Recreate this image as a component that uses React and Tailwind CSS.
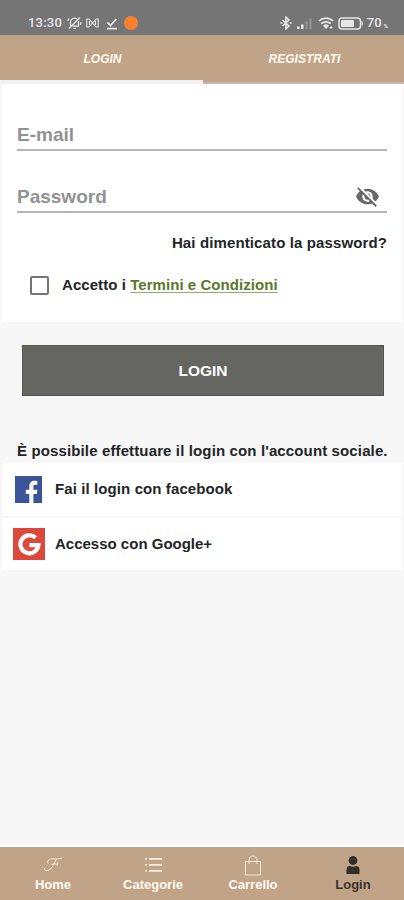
import React, { useState } from 'react';

const StatusBar = () => (
  <div className="flex h-[35px] items-start justify-between bg-[#757575] pl-7 pr-4 pt-[15px] text-[#e6e6e6]">
    <div className="flex h-4 items-center">
      <span className="w-[35px] whitespace-nowrap font-['Roboto'] text-[13px] font-medium tracking-[0.2px]">13:30</span>
      <svg className="ml-[4px] h-[14px] w-[15px]" viewBox="0 0 15 14" fill="none" stroke="currentColor" strokeWidth="1.3">
        <path d="M3.5 10V6a4 4 0 0 1 6.5-3M11.5 5v5.2H5.5M6.5 12.4h2.5M2 12.5 13 1.5M1 5l.8-2.5M14 6l-.5 3" />
      </svg>
      <svg className="ml-[4px] h-[10px] w-[13px]" viewBox="0 0 13 10" fill="none" stroke="currentColor" strokeWidth="1.1">
        <path d="M.8 9V1h2l3.700 4 3.700-4h2v8h-2l-3.700-4-3.700 4zM3.500 3v4M9.500 3v4" />
      </svg>
      <svg className="ml-[7px] h-[13px] w-[12px]" viewBox="0 0 12 13" fill="none" stroke="currentColor" strokeWidth="1.8">
        <path d="m1.3 5.5 3.2 3L10.3 2M1 11.6h10" />
      </svg>
      <span className="ml-[6px] h-[14px] w-[14px] rounded-full bg-[#fb802e]" />
    </div>
    <div className="flex h-4 items-center">
      <svg className="h-[14px] w-[12px]" viewBox="0 0 12 14" fill="none" stroke="currentColor" strokeWidth="1.6">
        <path d="m2.5 4 6.5 6-3 2.8V1.2L9 4l-6.5 6M.4 7h2M9.600 7h2" />
      </svg>
      <svg className="ml-[5px] h-[12px] w-[16px]" viewBox="0 0 16 12">
        <path d="M0 12V9.5h2.5V12zM4 12V7.5h2.5V12z" fill="#e6e6e6" />
        <path d="M8.5 12V4.5h2V12zM12.5 12V1.5h2V12z" fill="#979797" />
      </svg>
      <svg className="ml-[5px] h-[14px] w-[16px]" viewBox="0 0 16 14" fill="none" stroke="currentColor" strokeWidth="1.7">
        <path d="M.8 5a10.5 10.5 0 0 1 14.4 0M3.2 7.7a7 7 0 0 1 9.6 0" />
        <path d="M5 9.7a4.3 4.3 0 0 1 6 0l-3 3.2z" fill="currentColor" stroke="none" />
        <path d="M13 10v3M11.5 11.5h3" strokeWidth="1" />
      </svg>
      <svg className="ml-[4px] h-[13px] w-[26px]" viewBox="0 0 26 13">
        <rect x="1" y="1" width="21.5" height="11" rx="3" fill="none" stroke="#e6e6e6" strokeWidth="1.5" />
        <rect x="3" y="3" width="13" height="7" rx="1" fill="#e6e6e6" />
        <path d="M23.5 3.500q3 3 0 6z" fill="#e6e6e6" />
      </svg>
      <span className="ml-[3px] font-['Roboto'] text-[13px] font-medium">70</span>
      <span className="ml-[2px] mt-[5px] font-['Roboto'] text-[6px] font-bold">%</span>
    </div>
  </div>
);

const EyeOff = () => (
  <svg className="h-[25px] w-[25px]" viewBox="0 0 24 24" fill="#686868">
    <path d="M12 7c2.760 0 5 2.240 5 5 0 .65-.13 1.260-.36 1.830l2.920 2.920c1.510-1.260 2.700-2.890 3.430-4.750-1.730-4.390-6-7.500-11-7.500-1.400 0-2.740.25-3.980.7l2.160 2.160C10.740 7.130 11.350 7 12 7zM2 4.270l2.280 2.280.46.46C3.080 8.300 1.780 10.020 1 12c1.730 4.390 6 7.500 11 7.500 1.550 0 3.030-.3 4.380-.84l.42.42L19.730 22 21 20.730 3.270 3 2 4.270zM7.530 9.800l1.550 1.550c-.05.21-.08.43-.08.65 0 1.660 1.340 3 3 3 .22 0 .44-.03.65-.08l1.550 1.550c-.67.33-1.410.53-2.200.53-2.760 0-5-2.240-5-5 0-.79.2-1.530.53-2.200zm4.310-.78 3.150 3.150.02-.16c0-1.660-1.340-3-3-3l-.17.01z" />
  </svg>
);

const FacebookIcon = () => (
  <svg className="h-[27px] w-[27px]" viewBox="0 0 27 27">
    <path fill="#3b5499" d="M0 0h27v27H0z" />
    <path fill="#fff" d="M14.300 27V18h-3.500v-4.200h3.500V10.400c0-3.600 2.100-5.600 5.300-5.600 1.200 0 2.200.1 2.700.2v3.700h-1.800c-1.700 0-2.100.8-2.100 2v3.100h4L21.800 18h-3.400v9z" />
  </svg>
);

const GoogleIcon = () => (
  <svg className="h-[32px] w-[32px]" viewBox="0 0 32 32">
    <path fill="#dc483c" d="M0 0h32v32H0z" />
    <path d="M22.600 9.700A9 9 0 1 0 25.400 17.100H16.500" fill="none" stroke="#fff" strokeWidth="4.200" />
  </svg>
);

const HomeIcon = () => (
  <svg className="h-[16px] w-[20px]" viewBox="0 0 20 16" fill="none" stroke="#f6eadb" strokeWidth="1">
    <path d="M5 6.500C4 3 7 1.500 10 1.800s6 .2 9-.8M13.500 2C11 6 9.500 12.500 4.500 13.500c-2.500.4-4-1-2.700-2.500M8.500 7.500c2.500-.8 4.500-.6 6.500-.5M15 5.500l-1 3" />
  </svg>
);

const ListIcon = () => (
  <svg className="h-[16px] w-[17px]" viewBox="0 0 17 16" fill="#f8eddf">
    <path d="M0 1h2v1.500H0zM4 1h13v1.800H4zM0 7h2v1.500H0zM4 7h13v1.800H4zM0 13h2v1.500H0zM4 13h13v1.800H4z" />
  </svg>
);

const BagIcon = () => (
  <svg className="h-[21px] w-[18px]" viewBox="0 0 18 21" fill="none" stroke="#f3e5d4" strokeWidth="1">
    <path d="M1.500 6.500h15V20h-15zM5 9V5.500C5 2.500 6.700 1 9 1s4 1.500 4 4.500V9" />
  </svg>
);

const UserIcon = () => (
  <svg className="h-[18px] w-[14px]" viewBox="0 0 14 18" fill="#332d29">
    <circle cx="7" cy="4.500" r="4.400" />
    <path d="M.5 18v-4.500C.5 11 2 10 4 10c1.800.9 4.200.9 6 0 2 0 3.500 1 3.500 3.500V18z" />
  </svg>
);

const navItems = [
  { label: 'Home', icon: <HomeIcon /> },
  { label: 'Categorie', icon: <ListIcon /> },
  { label: 'Carrello', icon: <BagIcon /> },
  { label: 'Login', icon: <UserIcon />, active: true },
];

const App = () => {
  const [accepted, setAccepted] = useState(false);

  return (
    <div className="flex h-[900px] w-[404px] flex-col overflow-hidden bg-[#f7f7f7] font-['Liberation_Sans',sans-serif] font-bold text-[#222527]">
      <StatusBar />

      {/* Tabs */}
      <div className="grid h-[49px] grid-cols-[203px_1fr] bg-[#c1a488] text-[12px] italic text-[#fffaf0]">
        <button className="border-b-4 border-[#f4f2f1] pl-[2px] pt-[3px] font-bold">LOGIN</button>
        <button className="border-b-2 border-[#cbb7a3] pl-[2px] font-bold">REGISTRATI</button>
      </div>

      {/* Login form */}
      <div className="mx-[2px] h-[238px] bg-white px-[15px]">
        <div className="flex h-[67px] items-end border-b-2 border-[#b5b5b5] pb-[3px] text-[19px] leading-[22px] text-[#929292]">
          E-mail
        </div>
        <div className="flex h-[62px] items-end justify-between border-b-2 border-[#b5b5b5] pb-[3px] text-[19px] leading-[22px] text-[#929292]">
          Password
          <span className="mr-[7px] -mb-px"><EyeOff /></span>
        </div>
        <div className="mt-[20px] whitespace-nowrap text-right text-[15px] leading-5 tracking-[0.12px]">
          Hai dimenticato la password?
        </div>
        <div className="mt-[22px] flex h-5 items-center pl-[13px]">
          <button
            onClick={() => setAccepted(!accepted)}
            className={`h-[19px] w-[19px] rounded-[2px] border-2 border-[#747474] ${accepted ? 'bg-[#747474]' : 'bg-white'}`}
          />
          <span className="ml-[13px] whitespace-nowrap text-[15px] leading-5 tracking-[0.06px]">
            Accetto i <span className="text-[#58792a] underline decoration-[#94aa78] decoration-1 underline-offset-2">Termini e Condizioni</span>
          </span>
        </div>
      </div>

      <button className="ml-[22px] mt-[23px] h-[51px] w-[362px] shrink-0 border border-[#555552] bg-[#656562] text-[15.5px] font-bold text-white">
        LOGIN
      </button>

      {/* Social login */}
      <p className="mt-[45px] whitespace-nowrap pl-[17px] text-[15px] leading-5 tracking-[0.13px]">
        È possibile effettuare il login con l'account sociale.
      </p>
      <div className="mx-[2px] mt-[2px] flex flex-col gap-[2px] text-[15px]">
        <div className="flex h-[53px] items-center bg-white pl-[13px]">
          <FacebookIcon />
          <span className="ml-[13px] tracking-[0.1px]">Fai il login con facebook</span>
        </div>
        <div className="flex h-[52px] items-center bg-white pl-[11px]">
          <GoogleIcon />
          <span className="ml-[10px]">Accesso con Google+</span>
        </div>
      </div>

      {/* Bottom navigation */}
      <div className="mt-auto h-[55px] border-t-2 border-white">
        <div className="grid h-full grid-cols-4 border-t border-[#b0a69e] bg-[#c1a488] pl-[3px] pr-px">
          {navItems.map((item) => (
            <button key={item.label} className={`flex flex-col items-center justify-start font-bold ${item.active ? 'text-[#3c332c]' : 'text-[#fffaf0]'}`}>
              <span className="mt-[6px] flex h-[22px] items-center">{item.icon}</span>
              <span className="mt-px text-[13px] leading-4">{item.label}</span>
            </button>
          ))}
        </div>
      </div>
    </div>
  );
};

export default App;
